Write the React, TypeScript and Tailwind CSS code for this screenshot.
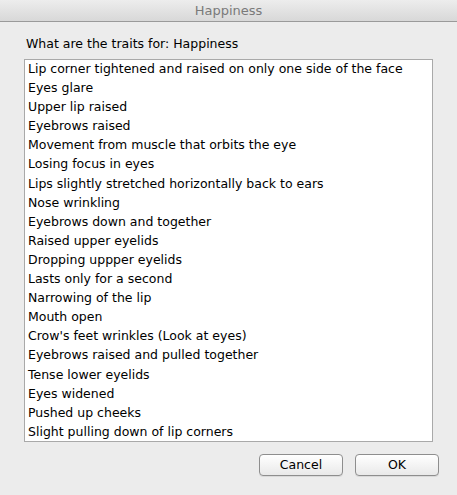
import React from "react";

const items = [
  "Lip corner tightened and raised on only one side of the face",
  "Eyes glare",
  "Upper lip raised",
  "Eyebrows raised",
  "Movement from muscle that orbits the eye",
  "Losing focus in eyes",
  "Lips slightly stretched horizontally back to ears",
  "Nose wrinkling",
  "Eyebrows down and together",
  "Raised upper eyelids",
  "Dropping uppper eyelids",
  "Lasts only for a second",
  "Narrowing of the lip",
  "Mouth open",
  "Crow's feet wrinkles (Look at eyes)",
  "Eyebrows raised and pulled together",
  "Tense lower eyelids",
  "Eyes widened",
  "Pushed up cheeks",
  "Slight pulling down of lip corners",
];

export default function App() {
  return (
    <div
      className="w-[457px] h-[495px] bg-[#ececec] flex flex-col text-black"
      style={{ fontFamily: '"DejaVu Sans", "Liberation Sans", sans-serif' }}
    >
      <div className="h-[22px] shrink-0 bg-gradient-to-b from-[#ededed] to-[#d8d8d8] border-b border-[#9a9a9a] flex items-center justify-center text-[13px] text-[#7a7a7a]">
        Happiness
      </div>
      <div className="flex flex-col px-[24px] pt-[14px]">
        <div className="text-[12.5px] leading-[15px] pl-[2px]">What are the traits for: Happiness</div>
        <div className="mt-[8px] w-[409px] h-[383px] bg-white border border-[#a9a9a9] pl-[3px]">
          {items.map((t) => (
            <div key={t} className="h-[19.1px] leading-[17px] text-[12.5px] whitespace-nowrap">
              {t}
            </div>
          ))}
        </div>
        <div className="flex justify-end gap-[12px] mt-[12px] mr-[-6px]">
          <button className="w-[84px] h-[22px] rounded-[4px] border border-[#8e8e8e] bg-gradient-to-b from-white to-[#e9e9e9] text-[12.5px] leading-[20px] shadow-[0_1px_0_rgba(0,0,0,0.08)]">
            Cancel
          </button>
          <button className="w-[84px] h-[22px] rounded-[4px] border border-[#8e8e8e] bg-gradient-to-b from-white to-[#e9e9e9] text-[12.5px] leading-[20px] shadow-[0_1px_0_rgba(0,0,0,0.08)]">
            OK
          </button>
        </div>
      </div>
    </div>
  );
}
